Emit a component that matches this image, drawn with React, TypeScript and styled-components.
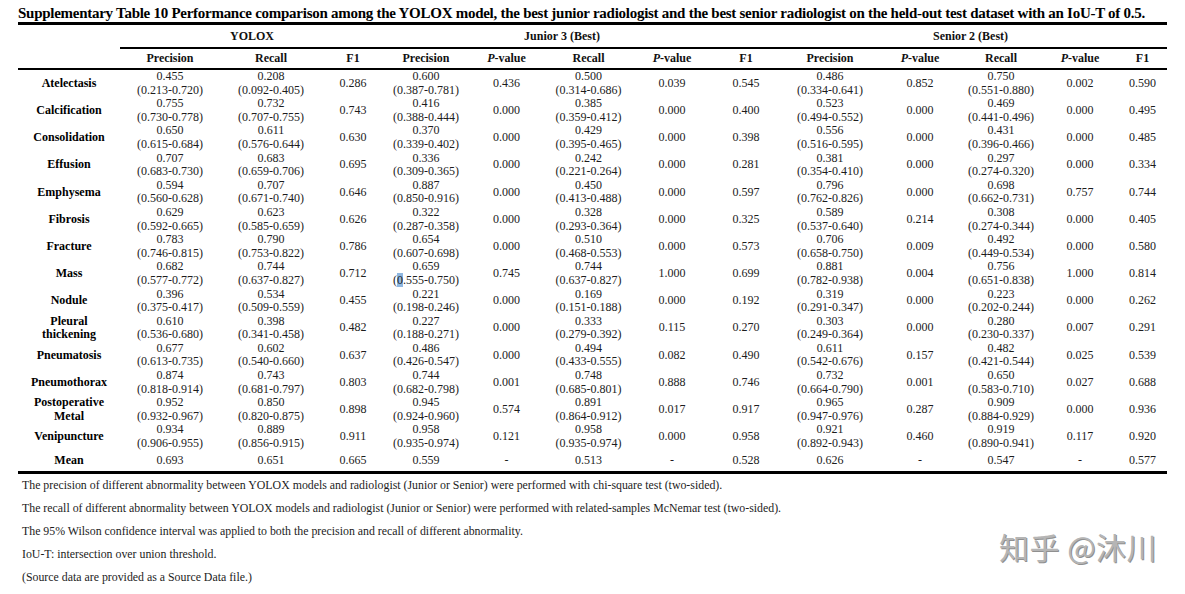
import React from "react";
import styled, { createGlobalStyle } from "styled-components";

const Global = createGlobalStyle`
  html, body { margin: 0; padding: 0; background: #fff; }
  body { font-family: "Liberation Serif", "Times New Roman", serif; color: #111; }
`;

const Page = styled.div`
  position: relative;
  width: 1185px;
  height: 594px;
  padding: 5px 0 0 18px;
  box-sizing: border-box;
  overflow: hidden;
`;

const Title = styled.div`
  font-size: 15px;
  font-weight: bold;
  line-height: 17px;
  letter-spacing: -0.27px;
  color: #000;
  white-space: nowrap;
  width: 1149px;
`;

const Table = styled.table`
  width: 1149px;
  table-layout: fixed;
  border-collapse: collapse;
  border-top: 3px solid #000;
  border-bottom: 3px solid #000;
`;

const GroupCell = styled.th<{ $shift?: number; $line?: boolean }>`
  height: 21px;
  padding: 1px ${(p) => p.$shift ?? 0}px 0 0;
  font-size: 12px;
  font-weight: bold;
  text-align: center;
  vertical-align: middle;
  border-bottom: ${(p) => (p.$line ? "2px solid #000" : "none")};
`;

const HeadRow = styled.tr`
  border-bottom: 2px solid #000;
`;

const HeadCell = styled.th`
  height: 19px;
  padding: 0;
  font-size: 12px;
  font-weight: bold;
  text-align: center;
  vertical-align: middle;
  white-space: nowrap;
`;

const Label = styled.th<{ $h?: number }>`
  height: ${(p) => p.$h ?? 27}px;
  padding: 0;
  font-size: 12px;
  line-height: 13.6px;
  font-weight: bold;
  text-align: center;
  vertical-align: middle;
  color: #000;
`;

const Cell = styled.td<{ $h?: number }>`
  height: ${(p) => p.$h ?? 27}px;
  padding: 0;
  font-size: 12px;
  line-height: 13.6px;
  text-align: center;
  vertical-align: middle;
  color: #1c1c1c;
  white-space: nowrap;
`;

const Line = styled.span`
  display: block;
`;

const Cursor = styled.span`
  background: #8fb7e0;
`;

const Notes = styled.div`
  display: flex;
  flex-direction: column;
  gap: 10px;
  padding: 5px 0 0 4px;
  font-size: 11.85px;
  line-height: 13px;
  color: #1c1c1c;
`;

const Watermark = styled.div`
  position: absolute;
  left: 999px;
  top: 524px;
  font-family: "Noto Sans CJK SC", "Noto Sans", sans-serif;
  font-size: 30px;
  font-weight: 400;
  letter-spacing: 0.5px;
  color: #b5b5b5;
  text-shadow: 1px 1px 0 #909090;
  white-space: nowrap;
`;

type Val = string | [string, string];

type Row = { label: string[]; vals: Val[] };

const rows: Row[] = [
  { label: ["Atelectasis"], vals: [["0.455", "(0.213-0.720)"], ["0.208", "(0.092-0.405)"], "0.286", ["0.600", "(0.387-0.781)"], "0.436", ["0.500", "(0.314-0.686)"], "0.039", "0.545", ["0.486", "(0.334-0.641)"], "0.852", ["0.750", "(0.551-0.880)"], "0.002", "0.590"] },
  { label: ["Calcification"], vals: [["0.755", "(0.730-0.778)"], ["0.732", "(0.707-0.755)"], "0.743", ["0.416", "(0.388-0.444)"], "0.000", ["0.385", "(0.359-0.412)"], "0.000", "0.400", ["0.523", "(0.494-0.552)"], "0.000", ["0.469", "(0.441-0.496)"], "0.000", "0.495"] },
  { label: ["Consolidation"], vals: [["0.650", "(0.615-0.684)"], ["0.611", "(0.576-0.644)"], "0.630", ["0.370", "(0.339-0.402)"], "0.000", ["0.429", "(0.395-0.465)"], "0.000", "0.398", ["0.556", "(0.516-0.595)"], "0.000", ["0.431", "(0.396-0.466)"], "0.000", "0.485"] },
  { label: ["Effusion"], vals: [["0.707", "(0.683-0.730)"], ["0.683", "(0.659-0.706)"], "0.695", ["0.336", "(0.309-0.365)"], "0.000", ["0.242", "(0.221-0.264)"], "0.000", "0.281", ["0.381", "(0.354-0.410)"], "0.000", ["0.297", "(0.274-0.320)"], "0.000", "0.334"] },
  { label: ["Emphysema"], vals: [["0.594", "(0.560-0.628)"], ["0.707", "(0.671-0.740)"], "0.646", ["0.887", "(0.850-0.916)"], "0.000", ["0.450", "(0.413-0.488)"], "0.000", "0.597", ["0.796", "(0.762-0.826)"], "0.000", ["0.698", "(0.662-0.731)"], "0.757", "0.744"] },
  { label: ["Fibrosis"], vals: [["0.629", "(0.592-0.665)"], ["0.623", "(0.585-0.659)"], "0.626", ["0.322", "(0.287-0.358)"], "0.000", ["0.328", "(0.293-0.364)"], "0.000", "0.325", ["0.589", "(0.537-0.640)"], "0.214", ["0.308", "(0.274-0.344)"], "0.000", "0.405"] },
  { label: ["Fracture"], vals: [["0.783", "(0.746-0.815)"], ["0.790", "(0.753-0.822)"], "0.786", ["0.654", "(0.607-0.698)"], "0.000", ["0.510", "(0.468-0.553)"], "0.000", "0.573", ["0.706", "(0.658-0.750)"], "0.009", ["0.492", "(0.449-0.534)"], "0.000", "0.580"] },
  { label: ["Mass"], vals: [["0.682", "(0.577-0.772)"], ["0.744", "(0.637-0.827)"], "0.712", ["0.659", "CURSOR"], "0.745", ["0.744", "(0.637-0.827)"], "1.000", "0.699", ["0.881", "(0.782-0.938)"], "0.004", ["0.756", "(0.651-0.838)"], "1.000", "0.814"] },
  { label: ["Nodule"], vals: [["0.396", "(0.375-0.417)"], ["0.534", "(0.509-0.559)"], "0.455", ["0.221", "(0.198-0.246)"], "0.000", ["0.169", "(0.151-0.188)"], "0.000", "0.192", ["0.319", "(0.291-0.347)"], "0.000", ["0.223", "(0.202-0.244)"], "0.000", "0.262"] },
  { label: ["Pleural", "thickening"], vals: [["0.610", "(0.536-0.680)"], ["0.398", "(0.341-0.458)"], "0.482", ["0.227", "(0.188-0.271)"], "0.000", ["0.333", "(0.279-0.392)"], "0.115", "0.270", ["0.303", "(0.249-0.364)"], "0.000", ["0.280", "(0.230-0.337)"], "0.007", "0.291"] },
  { label: ["Pneumatosis"], vals: [["0.677", "(0.613-0.735)"], ["0.602", "(0.540-0.660)"], "0.637", ["0.486", "(0.426-0.547)"], "0.000", ["0.494", "(0.433-0.555)"], "0.082", "0.490", ["0.611", "(0.542-0.676)"], "0.157", ["0.482", "(0.421-0.544)"], "0.025", "0.539"] },
  { label: ["Pneumothorax"], vals: [["0.874", "(0.818-0.914)"], ["0.743", "(0.681-0.797)"], "0.803", ["0.744", "(0.682-0.798)"], "0.001", ["0.748", "(0.685-0.801)"], "0.888", "0.746", ["0.732", "(0.664-0.790)"], "0.001", ["0.650", "(0.583-0.710)"], "0.027", "0.688"] },
  { label: ["Postoperative", "Metal"], vals: [["0.952", "(0.932-0.967)"], ["0.850", "(0.820-0.875)"], "0.898", ["0.945", "(0.924-0.960)"], "0.574", ["0.891", "(0.864-0.912)"], "0.017", "0.917", ["0.965", "(0.947-0.976)"], "0.287", ["0.909", "(0.884-0.929)"], "0.000", "0.936"] },
  { label: ["Venipuncture"], vals: [["0.934", "(0.906-0.955)"], ["0.889", "(0.856-0.915)"], "0.911", ["0.958", "(0.935-0.974)"], "0.121", ["0.958", "(0.935-0.974)"], "0.000", "0.958", ["0.921", "(0.892-0.943)"], "0.460", ["0.919", "(0.890-0.941)"], "0.117", "0.920"] },
];

const meanVals = ["0.693", "0.651", "0.665", "0.559", "-", "0.513", "-", "0.528", "0.626", "-", "0.547", "-", "0.577"];

const widths = [102, 100, 102, 62, 84, 77, 87, 80, 68, 100, 80, 82, 76, 49];

const PV = () => (
  <>
    <i>P</i>-value
  </>
);

const subHeads: React.ReactNode[] = [
  "Precision", "Recall", "F1",
  "Precision", <PV />, "Recall", <PV />, "F1",
  "Precision", <PV />, "Recall", <PV />, "F1",
];

const notes = [
  "The precision of different abnormality between YOLOX models and radiologist (Junior or Senior) were performed with chi-square test (two-sided).",
  "The recall of different abnormality between YOLOX models and radiologist (Junior or Senior) were performed with related-samples McNemar test (two-sided).",
  "The 95% Wilson confidence interval was applied to both the precision and recall of different abnormality.",
  "IoU-T: intersection over union threshold.",
  "(Source data are provided as a Source Data file.)",
];

function renderVal(v: Val) {
  if (typeof v === "string") return v;
  return (
    <>
      <Line>{v[0]}</Line>
      <Line>
        {v[1] === "CURSOR" ? (
          <>
            (<Cursor>0</Cursor>.555-0.750)
          </>
        ) : (
          v[1]
        )}
      </Line>
    </>
  );
}

export default function App() {
  return (
    <>
      <Global />
      <Page>
        <Title>
          Supplementary Table 10 Performance comparison among the YOLOX model, the best junior radiologist and the best
          senior radiologist on the held-out test dataset with an IoU-T of 0.5.
        </Title>
        <Table>
          <colgroup>
            {widths.map((w, i) => (
              <col key={i} style={{ width: w }} />
            ))}
          </colgroup>
          <thead>
            <tr>
              <GroupCell />
              <GroupCell colSpan={3} $line>
                YOLOX
              </GroupCell>
              <GroupCell colSpan={5} $line $shift={40}>
                Junior 3 (Best)
              </GroupCell>
              <GroupCell colSpan={5} $line $shift={6}>
                Senior 2 (Best)
              </GroupCell>
            </tr>
            <HeadRow>
              <HeadCell />
              {subHeads.map((h, i) => (
                <HeadCell key={i}>{h}</HeadCell>
              ))}
            </HeadRow>
          </thead>
          <tbody>
            {rows.map((r) => (
              <tr key={r.label.join(" ")}>
                <Label>
                  {r.label.map((l) => (
                    <Line key={l}>{l}</Line>
                  ))}
                </Label>
                {r.vals.map((v, i) => (
                  <Cell key={i}>{renderVal(v)}</Cell>
                ))}
              </tr>
            ))}
            <tr>
              <Label $h={20}>Mean</Label>
              {meanVals.map((v, i) => (
                <Cell key={i} $h={20}>
                  {v}
                </Cell>
              ))}
            </tr>
          </tbody>
        </Table>
        <Notes>
          {notes.map((n) => (
            <div key={n}>{n}</div>
          ))}
        </Notes>
        <Watermark>知乎 @沐川</Watermark>
      </Page>
    </>
  );
}
